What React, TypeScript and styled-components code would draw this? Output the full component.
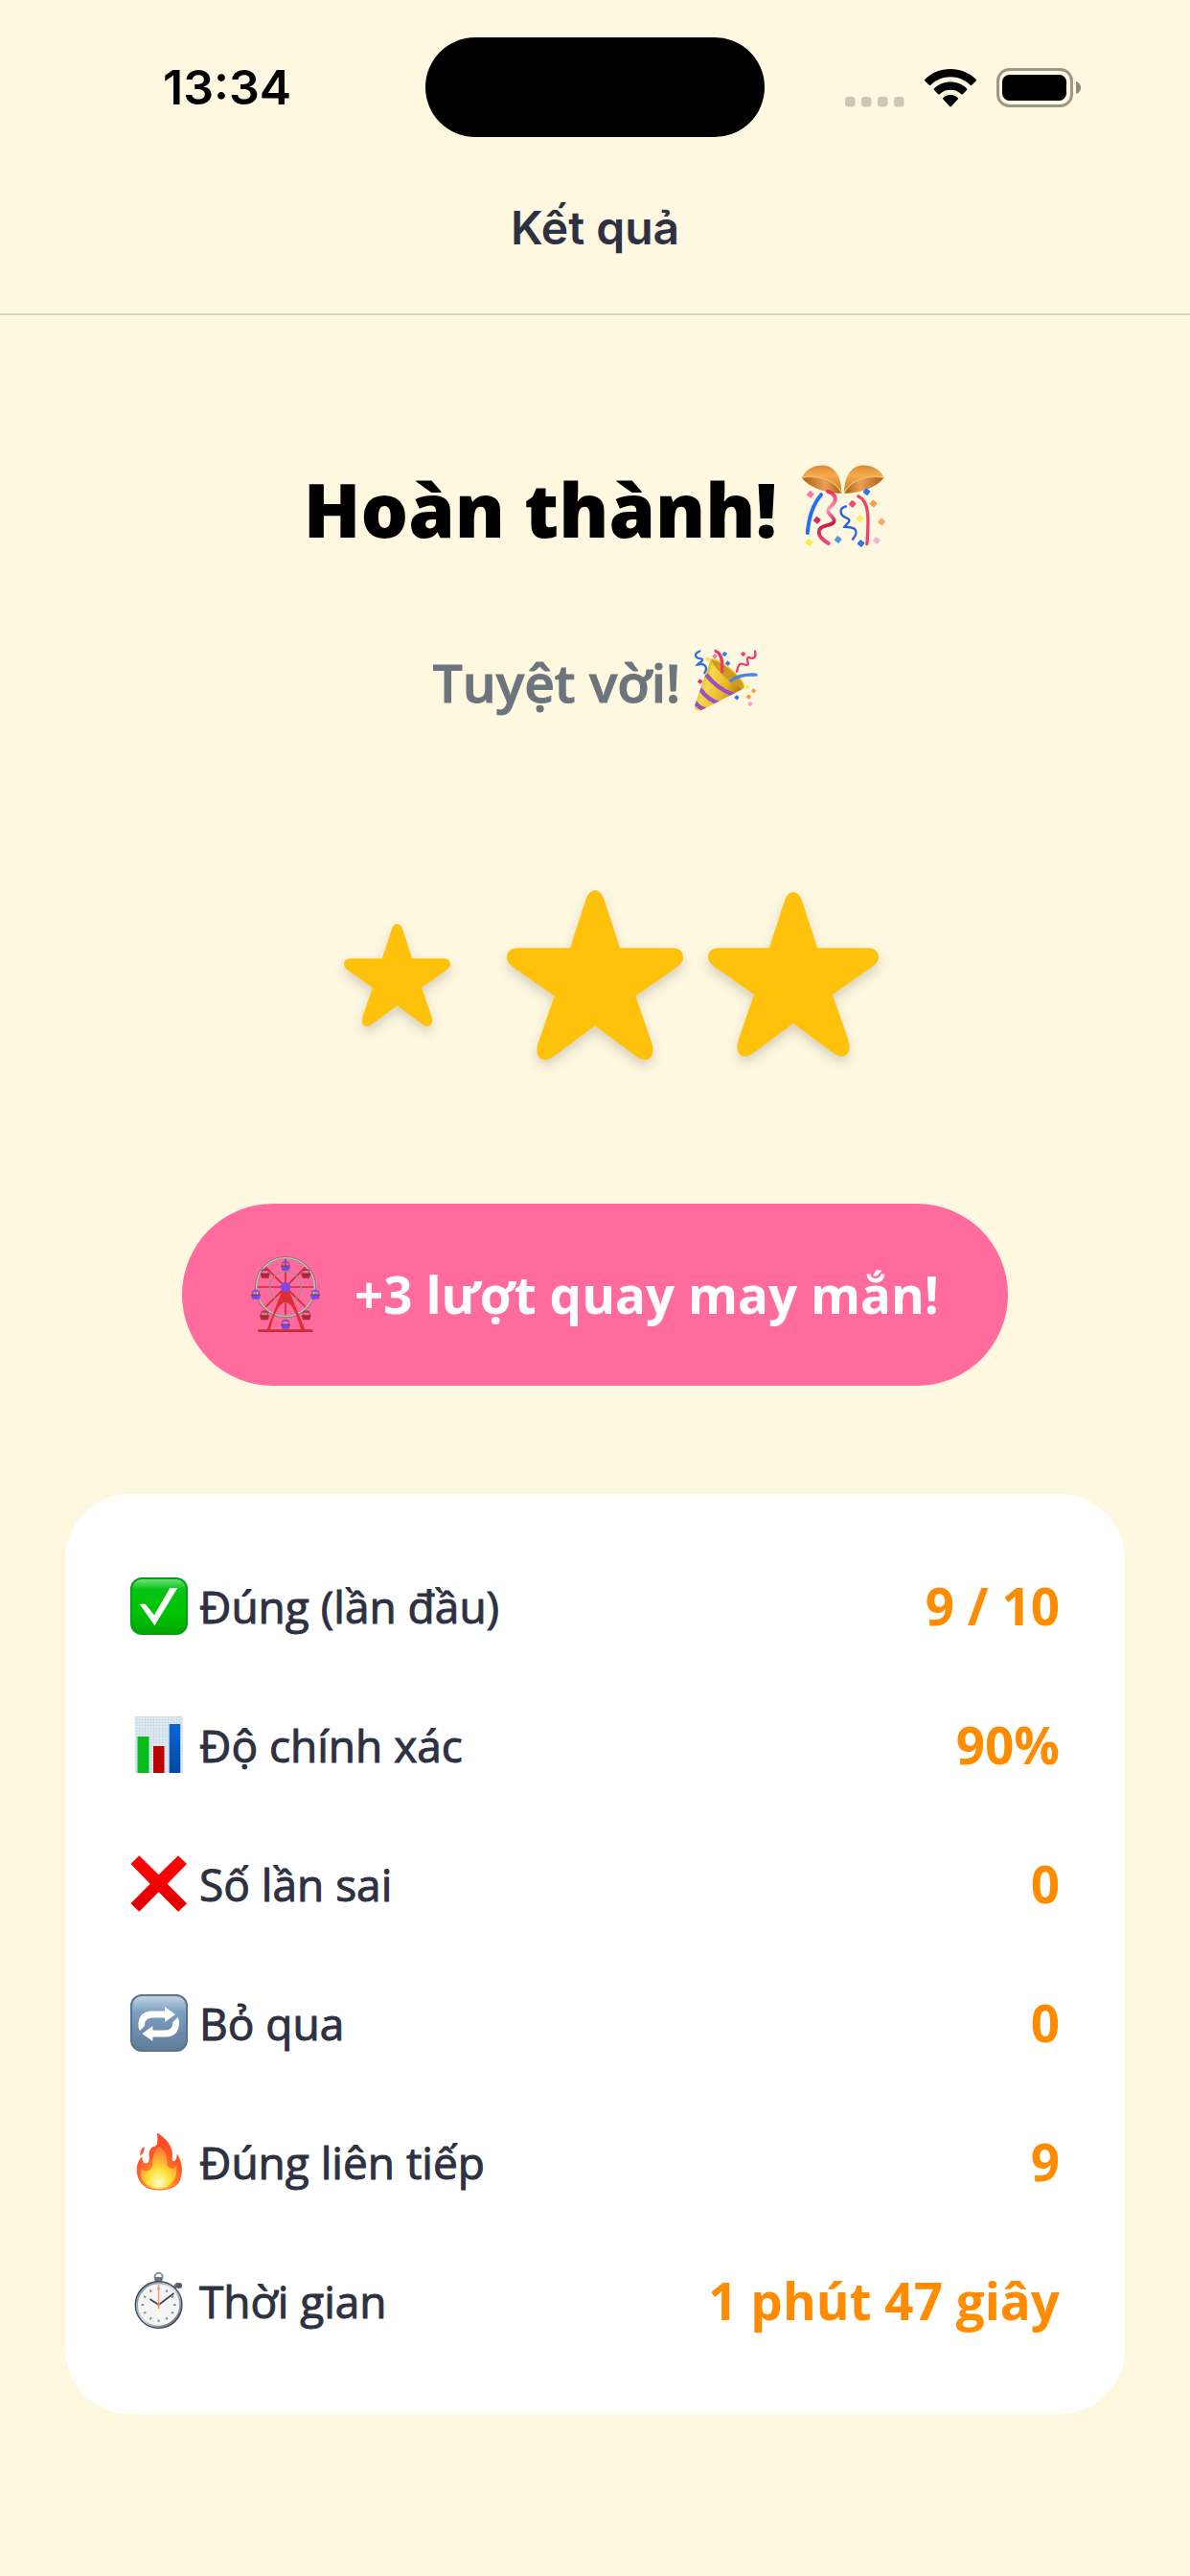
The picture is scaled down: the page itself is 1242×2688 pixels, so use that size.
import React from "react";
import styled, { createGlobalStyle } from "styled-components";

const GlobalStyle = createGlobalStyle`
  *, *::before, *::after { box-sizing: border-box; }
  body {
    margin: 0;
    min-height: 100vh;
    background: #fff8e1;
    color: #2d3142;
    font-family: "Open Sans", "Noto Sans", sans-serif;
  }
  svg { display: block; flex: none; overflow: visible; }
`;

const Screen = styled.div`
  display: flex;
  flex-direction: column;
`;

const StatusBar = styled.div`
  display: grid;
  grid-template-columns: 1fr 354px 1fr;
  align-items: center;
  height: 182px;
`;

const Clock = styled.time`
  padding-left: 30px;
  text-align: center;
  font: 600 50px/60px Inter, sans-serif;
  color: #000;
`;

const Island = styled.div`
  height: 104px;
  border-radius: 52px;
  background: #000;
`;

const StatusIcons = styled.div`
  display: flex;
  align-items: flex-end;
  justify-content: flex-end;
  gap: 21px;
  padding-right: 114px;
`;

const Header = styled.header`
  display: flex;
  justify-content: center;
  margin-bottom: 142px;
  padding: 26px 0 59px;
  border-bottom: 2px solid #d9d2bf;
`;

const HeaderTitle = styled.h1`
  margin: 0;
  font: 600 48px/60px Inter, sans-serif;
  color: #2d3142;
`;

const Result = styled.main`
  display: flex;
  flex-direction: column;
  align-items: center;
  padding: 0 68px;
`;

const Headline = styled.h2`
  display: flex;
  align-items: center;
  gap: 24px;
  margin: 0 0 81px;
  font-size: 78px;
  font-weight: 800;
  line-height: 120px;
  color: #000;

  svg { margin-bottom: 8px; }
`;

const Praise = styled.p`
  display: flex;
  align-items: center;
  gap: 14px;
  margin: 0 0 175px;
  font-size: 55px;
  font-weight: 600;
  line-height: 80px;
  color: #6c757d;
  -webkit-text-stroke: 1px currentColor;

  svg { margin-bottom: 4px; }
`;

const Stars = styled.div`
  display: flex;
  gap: 27px;
  margin-bottom: 149px;
`;

const StarCell = styled.div`
  display: flex;
  align-items: center;
  justify-content: center;
  width: 180px;
  height: 180px;
`;

const StarShape = styled.svg<{ $size: number }>`
  width: ${(p) => p.$size}px;
  filter: drop-shadow(0 6px 6px rgba(0, 0, 0, 0.16));
`;

const SpinBadge = styled.div`
  display: flex;
  align-items: center;
  gap: 36px;
  margin-bottom: 113px;
  padding: 50px 72px;
  border-radius: 95px;
  background: #ff6b9d;
  color: #fff;
  font-size: 53px;
  font-weight: 700;
  line-height: 90px;
`;

const StatCard = styled.dl`
  align-self: stretch;
  margin: 0;
  padding: 44px 68px 46px;
  border-radius: 68px;
  background: #fff;
`;

const StatRow = styled.div`
  display: flex;
  align-items: center;
  justify-content: space-between;
  height: 145px;
`;

const StatLabel = styled.dt`
  display: flex;
  align-items: center;
  gap: 12px;
  font-size: 46px;
  font-weight: 400;
  line-height: 60px;
  -webkit-text-stroke: 1px currentColor;
`;

const StatValue = styled.dd`
  margin: 0;
  font-size: 53px;
  font-weight: 700;
  line-height: 60px;
  color: #ff8c00;
`;

const SignalDots = () => (
  <svg width="62" height="11" viewBox="0 0 62 11" fill="#cdc6b4">
    {[0, 17, 34, 51].map((x) => (
      <rect key={x} x={x} width="10.5" height="10.5" rx="3.4" />
    ))}
  </svg>
);

const Wifi = () => (
  <svg width="54" height="40" viewBox="0 0 54 40" fill="#000">
    <path d="M27 0C16.700 0 7.300 4 .4 10.700a1.200 1.200 0 0 0 0 1.700l4.300 4.300a1.200 1.200 0 0 0 1.700 0C11.800 11.400 19 8.300 27 8.300s15.200 3.100 20.600 8.400a1.200 1.200 0 0 0 1.700 0l4.300-4.300a1.200 1.200 0 0 0 0-1.700C46.700 4 37.300 0 27 0z" />
    <path d="M27 13.500c-6.600 0-12.600 2.600-17 6.800a1.200 1.200 0 0 0 0 1.700l4.200 4.200a1.200 1.200 0 0 0 1.700 0A16 16 0 0 1 27 21.800a16 16 0 0 1 11.100 4.400 1.200 1.200 0 0 0 1.700 0L44 22a1.200 1.200 0 0 0 0-1.700c-4.400-4.200-10.400-6.800-17-6.800z" />
    <path d="M27 27c-2.900 0-5.600 1.100-7.700 2.900a1.200 1.200 0 0 0 0 1.700l6.900 7.400a1.200 1.200 0 0 0 1.700 0l6.900-7.400a1.200 1.200 0 0 0 0-1.700C32.600 28.100 29.900 27 27 27z" />
  </svg>
);

const Battery = () => (
  <svg width="88" height="41" viewBox="0 0 88 41">
    <rect x="1.500" y="1.500" width="77" height="38" rx="12" fill="none" stroke="#9c9788" strokeWidth="3" />
    <rect x="6" y="7" width="67" height="27" rx="7.500" />
    <path d="M83 14c3.300 1 5 3.500 5 6.500s-1.700 5.500-5 6.500z" fill="#8e897b" />
  </svg>
);

const Star = ({ size }: { size: number }) => (
  <StarCell>
    <StarShape $size={size} viewBox="0 0 184 177" fill="#ffc10a">
      <path d="M92 0C96.500 0 100 4 102 11L118 60.300H173C180 60.300 184 64.500 184 70C184 74 181.500 77 177 80.500L134.300 110.300L151.500 160C154 168 152 177 144 177C141 177 138 175.500 134 172.600L92 141.300L50 172.600C46 175.500 43 177 40 177C32 177 30 168 32.500 160L49.700 110.300L7 80.500C2.500 77 0 74 0 70C0 64.500 4 60.300 11 60.300H66L82 11C84 4 87.500 0 92 0Z" />
    </StarShape>
  </StarCell>
);

const Diamond = ({ x, y, c, r = 9 }: { x: number; y: number; c: string; r?: number }) => (
  <rect x={x - r} y={y - r} width={r * 2} height={r * 2} rx={r / 3} fill={c} transform={`rotate(40 ${x} ${y})`} />
);

const BowlHalf = () => (
  <>
    <path d="M63 84C75 55 105 43 135 45C168 48 188 82 188 132C155 132 92 120 63 84Z" fill="url(#bowl)" />
    <path d="M63 84C95 74 165 82 188 132C150 133 90 120 63 84Z" fill="url(#bowlIn)" />
    <path d="M63 84C95 74 165 82 188 132" fill="none" stroke="#f9bd62" strokeWidth="4" />
  </>
);

const ConfettiBall = () => (
  <svg width="90" height="87" viewBox="58 40 270 262">
    <defs>
      <linearGradient id="bowl" x1="0" y1="0" x2="0" y2="1">
        <stop offset="0" stopColor="#d98a35" />
        <stop offset="0.35" stopColor="#f6ab4d" />
        <stop offset="1" stopColor="#c87a22" />
      </linearGradient>
      <linearGradient id="bowlIn" x1="0" y1="0" x2="1" y2="0">
        <stop offset="0" stopColor="#a35f1b" />
        <stop offset="0.6" stopColor="#ee9f55" />
        <stop offset="1" stopColor="#9c5c16" />
      </linearGradient>
      <linearGradient id="ribbon" x1="0" y1="0" x2="0" y2="1">
        <stop offset="0" stopColor="#ee2d5e" />
        <stop offset="0.35" stopColor="#f7a0c4" />
        <stop offset="0.6" stopColor="#c91747" />
        <stop offset="1" stopColor="#f2497a" />
      </linearGradient>
    </defs>
    <BowlHalf />
    <g transform="translate(384 0) scale(-1 1)">
      <BowlHalf />
    </g>
    <g fill="none" strokeLinecap="round">
      <path d="M124 137C100 165 85 205 81 257" stroke="#2470f5" strokeWidth="12" />
      <path d="M145 127C175 137 172 158 158 170C142 184 142 190 155 202C172 220 165 228 143 233C108 240 107 267 147 290" stroke="url(#ribbon)" strokeWidth="12" />
      <path d="M202 174C178 180 182 202 203 210C225 219 202 229 197 238C222 238 250 244 223 277" stroke="#2860df" strokeWidth="7" />
      <path d="M240 142C276 159 274 208 268 292" stroke="#f04168" strokeWidth="10" />
    </g>
    <Diamond x={90} y={136} c="#f47ba9" />
    <Diamond x={111} y={217} c="#df2458" />
    <Diamond x={86} y={287} c="#f6ef3e" />
    <Diamond x={177} y={278} c="#5593ee" />
    <Diamond x={222} y={166} c="#ef477c" />
    <Diamond x={267} y={128} c="#2878f2" />
    <Diamond x={288} y={165} c="#f8a14c" />
    <Diamond x={314} y={222} c="#f8ac61" />
    <Diamond x={246} y={212} c="#f6ee53" />
    <Diamond x={249} y={290} c="#2e78dc" />
    <Diamond x={298} y={281} c="#f8b4d6" />
  </svg>
);

const PartyPopper = () => (
  <svg width="66" height="66" viewBox="58 50 198 197">
    <defs>
      <linearGradient id="cone" x1="0" y1="0" x2="1" y2="0.45">
        <stop offset="0" stopColor="#a87310" />
        <stop offset="0.4" stopColor="#f8d94a" />
        <stop offset="0.75" stopColor="#e6b52c" />
        <stop offset="1" stopColor="#b57b12" />
      </linearGradient>
      <clipPath id="coneClip">
        <path d="M111 82L61 228C58 240 70 246 80 243L210 176C180 163 126 118 111 82Z" />
      </clipPath>
    </defs>
    <path d="M111 82C125 75 230 145 215 173C194 187 116 122 111 82Z" fill="#d39a20" />
    <path d="M111 82L61 228C58 240 70 246 80 243L210 176C180 163 126 118 111 82Z" fill="url(#cone)" />
    <g clipPath="url(#coneClip)" fill="none" stroke="#9c4fc3" strokeWidth="13">
      <path d="M97 130C120 160 155 185 190 195" />
      <path d="M77 174C95 200 120 217 145 222" />
      <path d="M60 213C68 229 82 236 95 239" />
    </g>
    <path d="M112 83C130 70 224 145 215 172" fill="none" stroke="#f6ce3c" strokeWidth="4" />
    <g fill="none" strokeLinecap="round">
      <path d="M127 57C145 64 149 85 147 121" stroke="#ed3d66" strokeWidth="10" />
      <path d="M175 149C196 134 221 129 253 131" stroke="#4688e9" strokeWidth="10" />
      <path d="M77 57C57 65 62 78 78 80C98 82 72 96 70 99C90 94 105 104 92 125" stroke="#2e6fe4" strokeWidth="7" />
      <path d="M250 57C255 75 245 83 234 77C218 72 231 94 228 99C215 106 202 78 193 121" stroke="#e83e70" strokeWidth="7" />
    </g>
    <Diamond x={102} y={82} c="#f4e747" r={6} />
    <Diamond x={124} y={73} c="#f47ca6" r={6} />
    <Diamond x={155} y={66} c="#2f80e8" r={6} />
    <Diamond x={165} y={95} c="#2f80e8" r={6} />
    <Diamond x={213} y={66} c="#ed4274" r={6} />
    <Diamond x={78} y={152} c="#dc3158" r={6} />
    <Diamond x={226} y={169} c="#f6ed55" r={6} />
    <Diamond x={246} y={181} c="#f4a047" r={6} />
    <Diamond x={230} y={200} c="#f49a43" r={6} />
    <Diamond x={193} y={202} c="#2e7be8" r={6} />
    <Diamond x={235} y={222} c="#f5a2c7" r={6} />
  </svg>
);

const CABINS: [number, number, string][] = [
  [146, 66, "#7748dc"],
  [210, 90, "#b8262d"],
  [239, 156, "#7748dc"],
  [211, 221, "#b8262d"],
  [146, 249, "#7748dc"],
  [80, 221, "#b8262d"],
  [53, 156, "#7748dc"],
  [82, 90, "#b8262d"],
];

const FerrisWheel = () => (
  <svg width="72" height="80" viewBox="38 34 216 240">
    <path d="M146 40V224M54 130H238M81 65L211 195M211 65L81 195" stroke="#d42b38" strokeWidth="5" />
    <circle cx="146" cy="130" r="49" fill="none" stroke="#a9898f" strokeWidth="4" />
    <circle cx="146" cy="130" r="92" fill="none" stroke="#85797a" strokeWidth="8" />
    <circle cx="146" cy="130" r="91" fill="none" stroke="#cfc6c4" strokeWidth="4" />
    {CABINS.map(([x, y, c]) => (
      <g key={`${x}-${y}`}>
        <path d={`M${x - 14} ${y - 11}Q${x} ${y - 26} ${x + 14} ${y - 11}Z`} fill={c} opacity="0.85" />
        <path d={`M${x - 10} ${y - 12}V${y + 2}M${x + 10} ${y - 12}V${y + 2}`} stroke="#77606e" strokeWidth="3" />
        <path d={`M${x - 15} ${y - 2}H${x + 15}L${x + 11} ${y + 12}H${x - 11}Z`} fill={c} />
        <path d={`M${x - 15} ${y - 2}H${x + 15}`} stroke="#51315f" strokeWidth="2" />
      </g>
    ))}
    <path d="M136 139L88 263H98C110 215 127 178 146 178S182 215 194 263H207L156 139Z" fill="#dc2f31" />
    <path d="M60 263H231V271H60Z" fill="#c82b31" />
    <circle cx="146" cy="130" r="16" fill="#8249df" />
  </svg>
);

const IconBox = ({ children }: { children: React.ReactNode }) => (
  <svg width="60" height="60" viewBox="0 0 60 60" aria-hidden="true">
    {children}
  </svg>
);

const CheckIcon = () => (
  <IconBox>
    <defs>
      <linearGradient id="green" x1="0" y1="0" x2="0" y2="1">
        <stop offset="0" stopColor="#7be383" />
        <stop offset="0.2" stopColor="#06c414" />
        <stop offset="0.6" stopColor="#00c404" />
        <stop offset="1" stopColor="#00a800" />
      </linearGradient>
    </defs>
    <rect x="1" y="1" width="58" height="58" rx="11" fill="url(#green)" stroke="#079d1d" strokeWidth="2" />
    <path d="M9.600 27.700H15.700L25 39.300L41.400 11H49.300L25.400 50.300Z" fill="#fff" />
  </IconBox>
);

const ChartIcon = () => (
  <IconBox>
    <defs>
      <pattern id="paper" width="3" height="3" patternUnits="userSpaceOnUse">
        <rect width="3" height="3" fill="#dfe9f1" />
        <path d="M0 0H3M0 0V3" stroke="#c2d0dc" strokeWidth="0.8" />
      </pattern>
      <linearGradient id="blueBar" x1="0" y1="0" x2="0" y2="1">
        <stop offset="0" stopColor="#0866d8" />
        <stop offset="1" stopColor="#004aa3" />
      </linearGradient>
    </defs>
    <rect x="4.600" width="50" height="59" fill="url(#paper)" />
    <rect x="7.500" y="21" width="12" height="38" fill="#05bd1b" />
    <rect x="24" y="31" width="11.500" height="28" fill="#ba0205" />
    <rect x="40.700" y="8" width="11.500" height="51" fill="url(#blueBar)" />
  </IconBox>
);

const CrossIcon = () => (
  <IconBox>
    <defs>
      <linearGradient id="redX" x1="0" y1="0" x2="0" y2="1">
        <stop offset="0" stopColor="#ff0505" />
        <stop offset="1" stopColor="#df0000" />
      </linearGradient>
    </defs>
    <path d="M9.300 .3L29.600 20.300L50 .3L59 9L38.600 29.700L59 50.300L50 58.700L29.600 38.300L9.300 58.700L.4 50.300L20.700 29.700L.4 9Z" fill="url(#redX)" />
  </IconBox>
);

const LOOP_ARROW =
  "M8.500 33C8 22.500 14 17.500 22 17.500H36V13L47 21L36 29V24.500H23C17.500 24.500 15 28 15 33L10 38C9 36.500 8.500 35 8.500 33Z";

const RepeatIcon = () => (
  <IconBox>
    <defs>
      <linearGradient id="steel" x1="0" y1="0" x2="0" y2="1">
        <stop offset="0" stopColor="#c5d7e5" />
        <stop offset="0.3" stopColor="#7c9fc3" />
        <stop offset="1" stopColor="#5f7b96" />
      </linearGradient>
    </defs>
    <rect x="1" y="1" width="58" height="58" rx="11" fill="url(#steel)" stroke="#57758f" strokeWidth="2" />
    <g fill="#fff">
      <path d={LOOP_ARROW} />
      <path d={LOOP_ARROW} transform="rotate(180 29.700 31)" />
    </g>
  </IconBox>
);

const FireIcon = () => (
  <IconBox>
    <defs>
      <radialGradient id="flame" cx="0.5" cy="0.95" r="0.95">
        <stop offset="0" stopColor="#ffd23a" />
        <stop offset="0.35" stopColor="#ff8a22" />
        <stop offset="0.6" stopColor="#ff5a26" />
        <stop offset="1" stopColor="#fb4024" />
      </radialGradient>
      <radialGradient id="core" cx="0.5" cy="0.85" r="0.75">
        <stop offset="0" stopColor="#fffcd0" />
        <stop offset="0.4" stopColor="#ffe23a" />
        <stop offset="1" stopColor="#ff8236" />
      </radialGradient>
    </defs>
    <path d="M28.200 0C36 5 43 12 43.500 21C43.700 25 42.500 28 44 29.500C47 30 49 27 49 22.500C53 29 55 38 52 47C52 49 50 51 50 52C44 58 37 59 29.600 59C21 59 14 56 11 51C7 45 6 37 8.500 31C9.500 28 11 26.500 11.800 25C12.500 29 13.500 32 16 32C20 32 20.500 28 20 23C19.700 17 23 14 26 14C29 13 29.500 6 28.200 0Z" fill="url(#flame)" stroke="#fa4a24" strokeWidth="0.8" />
    <path d="M30 14C37 18 39 25 38 31C38 38 47 38 48 34C50 44 45 56 30 58C14 56 9 47 12 37C15 41 23 40 23 32C23 25 25 18 30 14Z" fill="url(#core)" />
    <path d="M14.600 14C15 18 14 21 10.400 23.500C10 20 11 16 14.600 14Z" fill="#fa5838" />
  </IconBox>
);

const StopwatchIcon = () => (
  <IconBox>
    <defs>
      <linearGradient id="rim" x1="0" y1="0" x2="1" y2="1">
        <stop offset="0" stopColor="#62778e" />
        <stop offset="0.5" stopColor="#cddbea" />
        <stop offset="1" stopColor="#4e535c" />
      </linearGradient>
    </defs>
    <circle cx="29.600" cy="4.800" r="4" fill="none" stroke="#8598a9" strokeWidth="2" />
    <rect x="25.500" y="5" width="8" height="5" rx="1" fill="#6c7681" />
    <path d="M44 18L50 12" stroke="#68737f" strokeWidth="4" />
    <circle cx="51" cy="14" r="3" fill="#515963" />
    <circle cx="29.600" cy="34" r="23.700" fill="#f4f4f3" stroke="#44464f" strokeWidth="2.600" />
    <circle cx="29.600" cy="34" r="22.700" fill="none" stroke="url(#rim)" strokeWidth="2" />
    {Array.from({ length: 12 }, (_, i) => (
      <rect key={i} x="28.600" y="16" width="2" height="2.600" fill="#8f9293" transform={`rotate(${i * 30} 29.600 34)`} />
    ))}
    <path d="M29.600 34L45.500 22M29.600 34L20.400 28" stroke="#374451" strokeWidth="1.600" />
    <path d="M29.600 38V13" stroke="#f49b84" strokeWidth="1.600" />
    <circle cx="29.600" cy="33.500" r="1.600" fill="#e0795f" />
  </IconBox>
);

const STATS = [
  { icon: <CheckIcon />, label: "Đúng (lần đầu)", value: "9 / 10" },
  { icon: <ChartIcon />, label: "Độ chính xác", value: "90%" },
  { icon: <CrossIcon />, label: "Số lần sai", value: "0" },
  { icon: <RepeatIcon />, label: "Bỏ qua", value: "0" },
  { icon: <FireIcon />, label: "Đúng liên tiếp", value: "9" },
  { icon: <StopwatchIcon />, label: "Thời gian", value: "1 phút 47 giây" },
];

export default function App() {
  return (
    <Screen>
      <GlobalStyle />
      <StatusBar>
        <Clock>13:34</Clock>
        <Island />
        <StatusIcons>
          <SignalDots />
          <Wifi />
          <Battery />
        </StatusIcons>
      </StatusBar>
      <Header>
        <HeaderTitle>Kết quả</HeaderTitle>
      </Header>
      <Result>
        <Headline>
          Hoàn thành! <ConfettiBall />
        </Headline>
        <Praise>
          Tuyệt vời! <PartyPopper />
        </Praise>
        <Stars>
          <Star size={111} />
          <Star size={184} />
          <Star size={178} />
        </Stars>
        <SpinBadge>
          <FerrisWheel />
          +3 lượt quay may mắn!
        </SpinBadge>
        <StatCard>
          {STATS.map((s) => (
            <StatRow key={s.label}>
              <StatLabel>
                {s.icon}
                {s.label}
              </StatLabel>
              <StatValue>{s.value}</StatValue>
            </StatRow>
          ))}
        </StatCard>
      </Result>
    </Screen>
  );
}
